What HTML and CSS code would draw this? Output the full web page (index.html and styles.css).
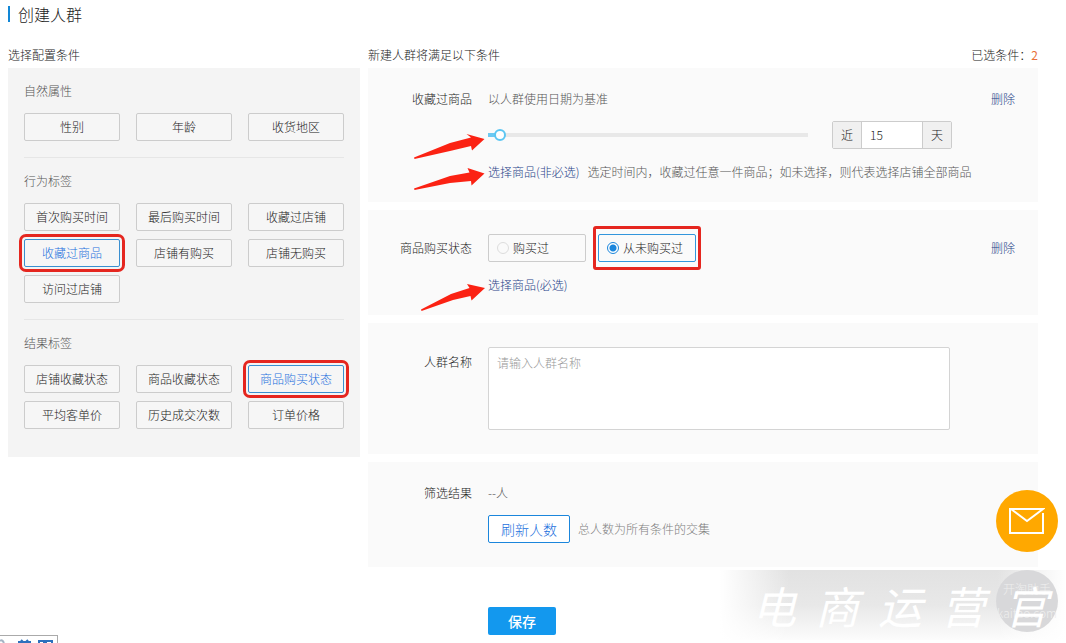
FILE: index.html
```html
<!DOCTYPE html>
<html lang="zh-CN">
<head>
<meta charset="utf-8">
<title>创建人群</title>
<link rel="stylesheet" href="styles.css">
</head>
<body>
<main class="page">
  <h1 class="page-title">创建人群</h1>
  <div class="columns">
    <section class="picker">
      <h2 class="column-head">选择配置条件</h2>
      <div class="picker-panel">
        <div class="group">
          <h3 class="group-title">自然属性</h3>
          <div class="tags">
            <button type="button" class="tag">性别</button>
            <button type="button" class="tag">年龄</button>
            <button type="button" class="tag">收货地区</button>
          </div>
        </div>
        <div class="group">
          <h3 class="group-title">行为标签</h3>
          <div class="tags">
            <button type="button" class="tag">首次购买时间</button>
            <button type="button" class="tag">最后购买时间</button>
            <button type="button" class="tag">收藏过店铺</button>
            <button type="button" class="tag selected">收藏过商品</button>
            <button type="button" class="tag">店铺有购买</button>
            <button type="button" class="tag">店铺无购买</button>
            <button type="button" class="tag">访问过店铺</button>
          </div>
        </div>
        <div class="group">
          <h3 class="group-title">结果标签</h3>
          <div class="tags">
            <button type="button" class="tag">店铺收藏状态</button>
            <button type="button" class="tag">商品收藏状态</button>
            <button type="button" class="tag selected">商品购买状态</button>
            <button type="button" class="tag">平均客单价</button>
            <button type="button" class="tag">历史成交次数</button>
            <button type="button" class="tag">订单价格</button>
          </div>
        </div>
      </div>
    </section>

    <form class="rules">
      <div class="split">
        <h2 class="column-head">新建人群将满足以下条件</h2>
        <span>已选条件：<b class="count">2</b></span>
      </div>
      <div class="cards">
        <section class="card card-favorite">
          <label class="label" for="days-range">收藏过商品</label>
          <div class="content">
            <p class="hint">以人群使用日期为基准</p>
            <div class="slider-row">
              <input type="range" class="slider" id="days-range" min="0" max="360" value="7">
              <div class="days">
                <label class="addon" for="days">近</label>
                <input type="text" class="days-input" id="days" value="15">
                <span class="addon">天</span>
              </div>
            </div>
            <p class="hint"><a class="link" href="#">选择商品(非必选)</a><span class="note">选定时间内，收藏过任意一件商品；如未选择，则代表选择店铺全部商品</span></p>
          </div>
          <a class="link" href="#">删除</a>
          <svg class="arrow arrow-slider" width="72" height="26" viewBox="0 0 72 26"><path d="M0 23.500 L36 9 L57 3.500 L52.500 0 L70.500 5 L58 16.500 L57 12 L36 17 L0.500 25 Z"/></svg>
          <svg class="arrow arrow-goods" width="72" height="24" viewBox="0 0 72 24"><path d="M0 20.500 L36 8 L55.500 4.500 L53.500 0 L70.500 5.500 L57.500 17.500 L57 13 L36 15 L0.500 22 Z"/></svg>
        </section>

        <section class="card card-status">
          <span class="label">商品购买状态</span>
          <div class="content">
            <div class="options">
              <label class="option"><input type="radio" class="radio" name="status">购买过</label>
              <label class="option checked"><input type="radio" class="radio" name="status" checked>从未购买过</label>
            </div>
            <p class="hint"><a class="link" href="#">选择商品(必选)</a></p>
          </div>
          <a class="link" href="#">删除</a>
          <svg class="arrow arrow-required" width="66" height="28" viewBox="0 0 66 28"><path d="M0 25.500 L30 10 L48.500 4 L46 0 L64 4 L50.500 16.500 L49.500 12 L32 16 L0.500 27 Z"/></svg>
        </section>

        <section class="card card-name">
          <label class="label" for="crowd-name">人群名称</label>
          <div class="content">
            <textarea class="name-input" id="crowd-name" placeholder="请输入人群名称"></textarea>
          </div>
        </section>

        <section class="card card-result">
          <span class="label">筛选结果</span>
          <div class="content">
            <p class="hint">--人</p>
            <div class="refresh-row">
              <button type="button" class="refresh">刷新人数</button>
              <span class="muted">总人数为所有条件的交集</span>
            </div>
          </div>
        </section>
      </div>
      <button type="button" class="save">保存</button>
    </form>
  </div>
</main>

<div class="watermark" aria-hidden="true">
  <span class="seal"><span>开淘助手</span><span>kaitao.com</span></span>
  <span class="watermark-text"><span>电</span><span>商</span><span>运</span><span>营</span><span>官</span></span>
</div>
<button type="button" class="mail" aria-label="消息">
  <svg width="36" height="28" viewBox="0 0 36 28"><path d="M34 6 V26 H1 V2 H34 L18 14 L2 2"/></svg>
</button>
<div class="status-tab" aria-hidden="true">
  <svg width="56" height="7" viewBox="0 0 56 7"><path class="dim" d="M0 5 Q2 3 4 7"/><path d="M18 6 H31 M21 4 L23 6 M28 4 L26 6 M39 7 V5 H44 V7 M46 7 V5 H52 V7"/></svg>
</div>
</body>
</html>
```
FILE: styles.css
```css
* { box-sizing: border-box; }

body {
  margin: 0;
  height: 100vh;
  position: relative;
  overflow: hidden;
  background: #fff;
  color: #222;
  font: 300 12px/20px "Noto Sans CJK SC", "Noto Sans", sans-serif;
}

button, input, textarea { font: inherit; color: inherit; margin: 0; }
button { cursor: pointer; padding: 0; }
h1, h2, h3, p { margin: 0; font-weight: inherit; }

.page { padding: 6px 28px 0 8px; }

.page-title {
  border-left: 2px solid #1287d6;
  padding-left: 8px;
  font-size: 16px;
  line-height: 16px;
}

.columns {
  display: grid;
  grid-template-columns: 352px 1fr;
  gap: 8px;
  align-items: start;
  margin-top: 23px;
}

.column-head { font-size: 12px; }
.picker, .rules { display: flex; flex-direction: column; }
.split { display: flex; justify-content: space-between; }
.count { font-weight: 400; color: #e8703a; }

.picker-panel { margin-top: 3px; background: #f4f4f4; padding: 0 16px 12px; }
.group { padding: 13px 0 16px; }
.group + .group { border-top: 1px solid #e6e6e6; }
.group-title { font-size: 12px; color: #555; margin-bottom: 12px; }
.tags { display: grid; grid-template-columns: repeat(3, 1fr); gap: 8px 16px; }

.tag {
  height: 28px;
  border: 1px solid #ccc;
  border-radius: 2px;
  background: #f6f6f6;
}

.tag.selected {
  border-color: #3a8fd0;
  color: #1c70dd;
  outline: 3px solid #e5261f;
  outline-offset: 2px;
}

.cards { display: grid; gap: 8px; margin-top: 3px; }

.card {
  position: relative;
  display: flex;
  gap: 16px;
  padding: 20px 23px 20px 0;
  background: #fafafa;
}

.label { width: 104px; text-align: right; }
.content { flex: 1; }
.hint { color: #555; }
.link { color: #1f4288; text-decoration: none; }
.note { margin-left: 8px; }

.card-favorite { padding-top: 21px; }
.slider-row { display: flex; align-items: center; gap: 24px; margin: 12px 0 13px; }

.slider {
  appearance: none;
  width: 320px;
  height: 12px;
  background: linear-gradient(to right, #6cc9f2 8px, #e8e8e8 8px) center / 100% 4px no-repeat;
}

.slider::-webkit-slider-thumb {
  appearance: none;
  width: 12px;
  height: 12px;
  border: 2px solid #5cc6f2;
  border-radius: 50%;
  background: #fff;
}

.days {
  display: flex;
  width: 120px;
  height: 28px;
  border: 1px solid #ccc;
  border-radius: 2px;
  line-height: 26px;
  background: #fff;
}

.addon { width: 28px; text-align: center; background: #f0f0f0; }
.days-input {
  flex: 1;
  min-width: 0;
  border: solid #ccc;
  border-width: 0 1px;
  padding: 0 8px;
  background: #fff;
}

.card-status { padding-top: 24px; }
.card-status > .label, .card-status > .link { line-height: 28px; }
.options { display: flex; gap: 12px; margin-bottom: 13px; }

.option {
  position: relative;
  display: flex;
  align-items: center;
  gap: 4px;
  width: 98px;
  height: 28px;
  padding-left: 8px;
  border: 1px solid #ccc;
  border-radius: 2px;
}

.option.checked { border-color: #3296dc; }
.option.checked::after {
  content: "";
  position: absolute;
  inset: -9px -6px;
  border: 3px solid #e5261f;
  border-radius: 3px;
}

.radio {
  appearance: none;
  width: 12px;
  height: 12px;
  border: 1px solid #ddd;
  border-radius: 50%;
}

.radio:checked {
  border-color: #1b86dc;
  background: radial-gradient(circle, #1b86dc 3px, #fff 4px);
}

.card-name { padding-top: 24px; padding-bottom: 24px; }
.card-name .label { padding-top: 5px; }
.name-input {
  display: block;
  width: 462px;
  height: 83px;
  padding: 5px 8px;
  border: 1px solid #d4d4d4;
  border-radius: 2px;
  background: #fff;
  resize: none;
}
.name-input::placeholder { color: #999; }

.card-result { padding: 21px 23px 24px 0; }
.refresh-row { display: flex; align-items: center; gap: 8px; margin-top: 12px; }
.refresh {
  width: 82px;
  height: 28px;
  border: 1px solid #1b86dc;
  border-radius: 2px;
  background: #fff;
  color: #1c70dd;
  font-size: 14px;
  line-height: 24px;
}
.muted { color: #808080; }

.save {
  width: 68px;
  height: 28px;
  margin: 40px 0 0 120px;
  border: 0;
  border-radius: 2px;
  background: #1398ee;
  color: #fff;
  font-size: 14px;
  font-weight: 500;
}

.arrow { position: absolute; fill: #fb2213; }
.arrow-slider { left: 46px; top: 66px; }
.arrow-goods { left: 46px; top: 100px; }
.arrow-required { left: 53px; top: 74px; }

.mail {
  position: absolute;
  right: 8px;
  bottom: 91px;
  display: grid;
  place-items: center;
  width: 62px;
  height: 62px;
  border: 0;
  border-radius: 50%;
  background: #ffa800;
}
.mail path { fill: none; stroke: #fff; stroke-width: 2; }

.watermark {
  position: absolute;
  right: 0;
  bottom: 3px;
  width: 346px;
  height: 70px;
  background:
    linear-gradient(to right, #fff, transparent 20%, transparent 80%, #fff),
    linear-gradient(to bottom, #e2e2e2, #e8e8e8 50%, #fcfcfc);
}
.watermark-text {
  position: absolute;
  inset: 0 18px 0 32px;
  display: flex;
  justify-content: space-between;
  align-items: center;
  color: #fff;
  font: italic 400 44px/70px "Noto Sans CJK SC", sans-serif;
}
.seal {
  position: absolute;
  right: 8px;
  top: 0;
  display: grid;
  align-content: center;
  gap: 8px;
  width: 62px;
  height: 62px;
  border-radius: 50%;
  background: #d8d8da;
  color: #eee;
  font-size: 12px;
  line-height: 16px;
  text-align: center;
}

.status-tab {
  position: absolute;
  left: 0;
  bottom: 0;
  width: 58px;
  height: 8px;
  border: solid #aaa;
  border-width: 1px 1px 0 0;
}
.status-tab svg { display: block; }
.status-tab path { fill: none; stroke: #2d70bd; stroke-width: 2; }
.status-tab .dim { stroke: #a5b4c4; }
```
